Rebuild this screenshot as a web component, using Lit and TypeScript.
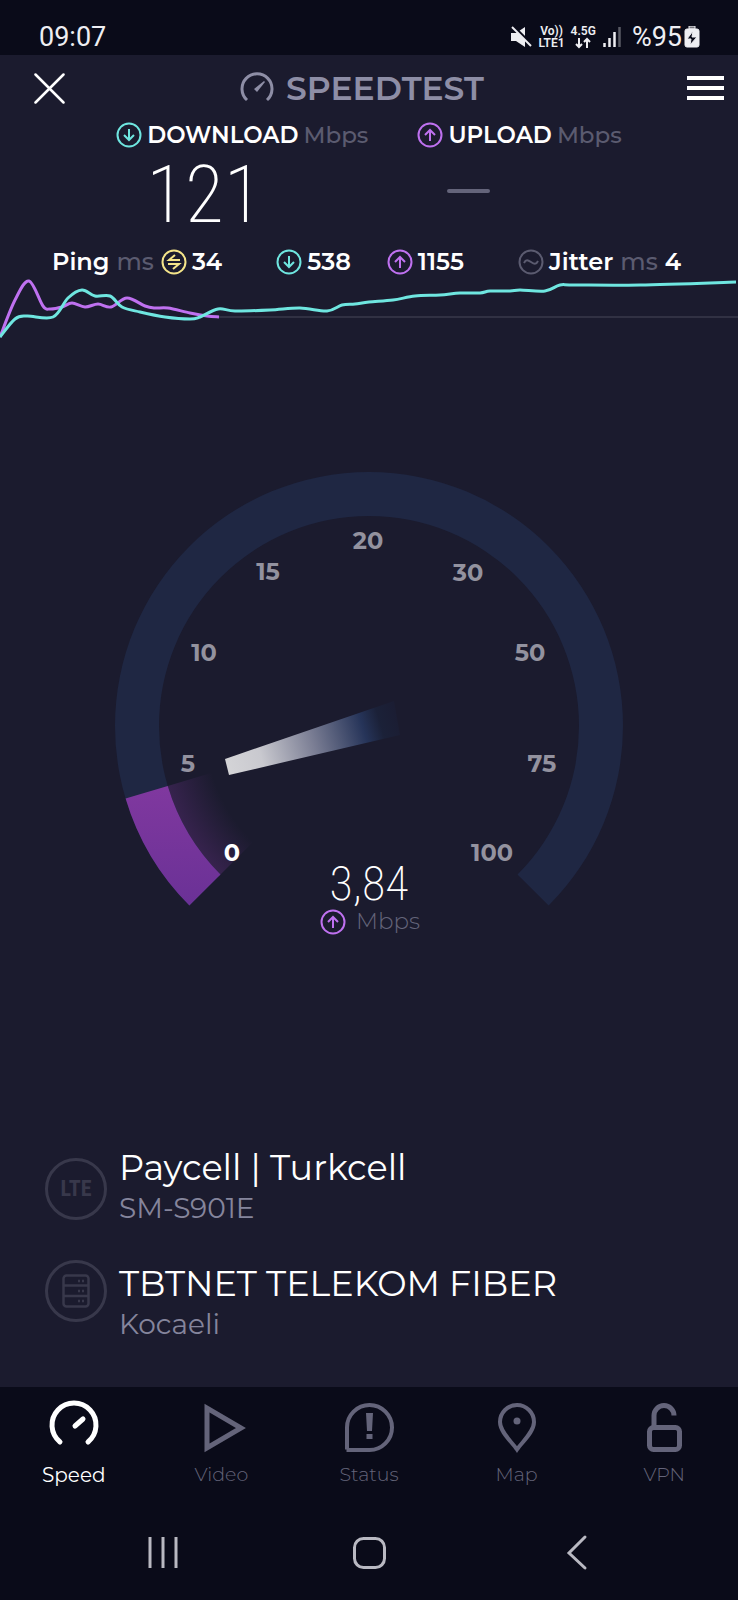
import { LitElement, html, svg, css } from "lit";
import { customElement } from "lit/decorators.js";
import { classMap } from "lit/directives/class-map.js";

type Point = [number, number];

const TRACE_DOWN: Point[] = [
  [0, 61], [15, 43], [27, 40], [53, 41], [68, 22], [82, 14], [95, 20], [110, 20], [122, 31], [140, 36],
  [165, 41], [190, 43], [200, 41], [218, 33], [235, 35], [270, 34], [300, 32], [327, 35], [342, 29],
  [355, 28], [369, 26], [393, 24], [415, 20], [440, 19], [460, 17], [480, 17], [490, 15], [510, 15],
  [520, 14], [545, 15], [560, 9], [575, 9], [640, 9], [736, 6],
];
const TRACE_UP: Point[] = [
  [0, 61], [15, 24], [29, 5], [43, 30], [50, 33], [62, 31], [72, 27], [85, 31], [98, 28], [111, 31],
  [127, 22], [145, 30], [155, 32], [168, 32], [190, 37], [207, 40], [219, 41],
];

/** Smooth line through the samples, with horizontal easing between neighbours. */
function smooth(points: Point[]): string {
  let d = `M${points[0][0]} ${points[0][1]}`;
  for (let i = 0; i < points.length - 1; i++) {
    const p0 = points[Math.max(i - 1, 0)];
    const p1 = points[i];
    const p2 = points[i + 1];
    const p3 = points[Math.min(i + 2, points.length - 1)];
    const c1 = [p1[0] + (p2[0] - p0[0]) / 6, p1[1] + (p2[1] - p0[1]) / 6];
    const c2 = [p2[0] - (p3[0] - p1[0]) / 6, p2[1] - (p3[1] - p1[1]) / 6];
    d += `C${c1[0]} ${c1[1]} ${c2[0]} ${c2[1]} ${p2[0]} ${p2[1]}`;
  }
  return d;
}

const CX = 369;
const CY = 266;
const R_OUT = 254;
const R_IN = 210;

function polar(r: number, deg: number): string {
  const a = (deg * Math.PI) / 180;
  return `${(CX + r * Math.cos(a)).toFixed(2)} ${(CY + r * Math.sin(a)).toFixed(2)}`;
}

/** Ring segment, clockwise from one angle to another. */
function ring(from: number, to: number, outer: number, inner: number): string {
  const large = to - from > 180 ? 1 : 0;
  return `M${polar(outer, from)}A${outer} ${outer} 0 ${large} 1 ${polar(outer, to)}L${polar(inner, to)}A${inner} ${inner} 0 ${large} 0 ${polar(inner, from)}Z`;
}

const TICKS: { label: string; x: number; y: number; lit?: boolean }[] = [
  { label: "0", x: 232, y: 401, lit: true },
  { label: "5", x: 188, y: 312 },
  { label: "10", x: 204, y: 201 },
  { label: "15", x: 268, y: 120 },
  { label: "20", x: 368, y: 89 },
  { label: "30", x: 468, y: 121 },
  { label: "50", x: 530, y: 201 },
  { label: "75", x: 542, y: 312 },
  { label: "100", x: 492, y: 401 },
];

const arrowDown = svg`<circle cx="13" cy="13" r="11.500"/><path d="M13 7v11M8 13l5 5 5-5"/>`;
const arrowUp = svg`<circle cx="13" cy="13" r="11.500"/><path d="M13 19V8M8 13l5-5 5 5"/>`;
const idle = svg`<circle cx="13" cy="13" r="11.500"/><path d="M19 11H8l6-5M7 15h11l-6 5"/>`;
const wave = svg`<circle cx="13" cy="13" r="11.500"/><path d="M6 14c2-4 4-3 7-1s5 3 7-1"/>`;

const TABS = [
  {
    label: "Speed",
    icon: svg`<path d="M12 41A22 22 0 1 1 40 41" stroke-width="5" stroke-linecap="round"/><path d="M27 25l8-7" stroke-width="5" stroke-linecap="round"/>`,
  },
  { label: "Video", icon: svg`<path d="M12 7v40l34-20z" stroke-width="5" stroke-miterlimit="10"/>` },
  {
    label: "Status",
    icon: svg`<path d="M4 48.500V26.500A22.500 22.500 0 1 1 26.500 49H3.500" stroke-width="4"/><path d="M23 12h7l-1 18h-5zM23.500 33h6v5h-6z" fill="currentColor" stroke="none"/>`,
  },
  {
    label: "Map",
    icon: svg`<path d="M26 48.500C21 41 9 31 9 21a17 17 0 0 1 34 0c0 10-12 20-17 27.500z" stroke-width="4"/><circle cx="26" cy="20" r="3.500" fill="currentColor" stroke="none"/>`,
  },
  {
    label: "VPN",
    icon: svg`<rect x="11.500" y="26.500" width="30" height="22" rx="4" stroke-width="5"/><path d="M16 26V14.500a10 10 0 0 1 20 0" stroke-width="5"/>`,
  },
];

@customElement("app-root")
export class AppRoot extends LitElement {
  static styles = css`
    :host {
      display: flex;
      flex-direction: column;
      min-height: 100vh;
      background: #1b1b2e;
      color: #fff;
      font-family: Montserrat, Inter, sans-serif;
    }
    button {
      padding: 0;
      border: 0;
      background: none;
      color: inherit;
      font: inherit;
      display: flex;
      cursor: pointer;
    }
    svg {
      display: block;
      fill: none;
      stroke: currentColor;
      flex: none;
    }
    .status {
      display: flex;
      align-items: center;
      justify-content: space-between;
      height: 55px;
      box-sizing: border-box;
      padding: 18px 38px 0 39px;
      background: #0a0b19;
      color: #eeeef2;
      font: 27px/36px Roboto, sans-serif;
    }
    .indicators {
      display: flex;
      align-items: center;
      gap: 6px;
    }
    .network {
      display: flex;
      flex-direction: column;
      align-items: center;
      font: 600 12px/12px Roboto, sans-serif;
    }
    .percent {
      display: flex;
      align-items: center;
      gap: 2px;
      margin-left: 4px;
    }
    .header {
      display: grid;
      grid-template-columns: 1fr auto 1fr;
      align-items: center;
      height: 66px;
      padding-right: 14px;
    }
    .close {
      padding-left: 34px;
    }
    .menu {
      justify-self: end;
    }
    .brand {
      display: flex;
      align-items: center;
      gap: 12px;
      margin: 0;
      color: #8e8ea6;
      font-size: 33px;
      line-height: 40px;
      font-weight: 600;
    }
    .results {
      display: flex;
      justify-content: center;
      gap: 49px;
    }
    .caption {
      display: flex;
      align-items: center;
      gap: 5px;
      font-size: 23px;
      line-height: 28px;
      font-weight: 600;
    }
    .unit {
      color: #5b5b70;
      font-weight: 500;
    }
    .value {
      display: flex;
      align-items: center;
      box-sizing: border-box;
      height: 92px;
      padding-left: 30px;
      font: 200 80px/92px "Roboto Condensed", Roboto, sans-serif;
    }
    .value.pending {
      padding-bottom: 8px;
    }
    .dash {
      width: 43px;
      height: 4px;
      border-radius: 2px;
      background: #64647a;
    }
    .latency {
      display: flex;
      justify-content: space-between;
      padding: 7px 57px 0 52px;
      font-size: 24px;
      line-height: 28px;
      font-weight: 600;
    }
    .group,
    .pair {
      display: flex;
      align-items: center;
      gap: 7px;
    }
    .group svg {
      margin-right: -2px;
    }
    .pair {
      gap: 36px;
    }
    .down { color: #6fe6e0; }
    .up { color: #bf71f0; }
    .idle { color: #f5e58a; }
    .dim { color: #5b5b70; }
    .trace {
      width: 100%;
      height: 66px;
    }
    .gauge {
      width: 100%;
      height: auto;
      margin-top: 118px;
      stroke: none;
    }
    .tick {
      fill: #93929f;
      font-size: 24px;
      font-weight: 700;
      text-anchor: middle;
    }
    .tick.lit { fill: #fff; }
    .speed {
      fill: #fff;
      font: 200 48px "Roboto Condensed", Roboto, sans-serif;
      text-anchor: middle;
    }
    .speed-unit {
      fill: #64647a;
      font-size: 23px;
      font-weight: 300;
    }
    .hosts {
      display: flex;
      flex-direction: column;
      gap: 26px;
      margin-top: auto;
      padding: 48px 45px 46px;
    }
    .host {
      display: flex;
      gap: 12px;
      align-items: flex-start;
    }
    .host:first-child { min-height: 90px; }
    .host:first-child .badge { align-self: center; }
    .badge {
      display: flex;
      align-items: center;
      justify-content: center;
      flex: none;
      box-sizing: border-box;
      width: 62px;
      height: 62px;
      border: 3px solid #38384b;
      border-radius: 50%;
      color: #38384b;
      font: 700 22px/24px "Roboto Condensed", Roboto, sans-serif;
    }
    .name {
      font-size: 35px;
      line-height: 47px;
    }
    .detail {
      color: #85859c;
      font-size: 28px;
      line-height: 34px;
    }
    .tabs {
      display: grid;
      grid-template-columns: repeat(5, 1fr);
      padding-top: 14px;
      background: #0a0b19;
    }
    .tab {
      display: flex;
      flex-direction: column;
      align-items: center;
      gap: 10px;
      color: #64647a;
      font-size: 19px;
      line-height: 24px;
      font-weight: 300;
      text-decoration: none;
    }
    .tab svg {
      overflow: visible;
    }
    .tab.active {
      color: #fff;
      font-size: 20px;
      font-weight: 400;
    }
    .system {
      display: grid;
      grid-template-columns: repeat(3, 1fr);
      justify-items: center;
      padding: 42px 60px 23px;
      background: #0a0b19;
      color: #b9b9c2;
    }
  `;

  private icon(cls: string, shape: unknown) {
    return html`<svg class=${cls} width="26" height="26" viewBox="0 0 26 26" stroke-width="2" aria-hidden="true">${shape}</svg>`;
  }

  render() {
    return html`
      <div class="status">
        <span>09:07</span>
        <div class="indicators">
          <svg width="22" height="22" viewBox="0 0 22 22" aria-hidden="true">
            <path d="M1 7h5l9-6v20l-9-6H1z" fill="currentColor" stroke="none" />
            <path d="M0 1l20 20" transform="translate(2 -2)" stroke="#0a0b19" stroke-width="3" />
            <path d="M2 1l19 19" stroke-width="2" />
          </svg>
          <div class="network"><span>Vo))</span><span>LTE1</span></div>
          <div class="network">
            <span>4.5G</span>
            <svg width="16" height="12" viewBox="0 0 16 12" stroke-width="2" aria-hidden="true">
              <path d="M4 1v9M1 7l3 3 3-3M12 11V2M9 5l3-3 3 3" />
            </svg>
          </div>
          <svg width="20" height="22" viewBox="0 0 20 22" stroke-width="2.500" aria-hidden="true">
            <path d="M2.500 21v-4M7.500 21v-9M12.500 21V6" />
            <path d="M17.500 21V1" opacity=".35" />
          </svg>
          <div class="percent">
            <span>%95</span>
            <svg width="16" height="22" viewBox="0 0 16 22" stroke="none" aria-hidden="true">
              <path d="M5 0h6v3H5z" fill="#77777f" />
              <rect x="1" y="3" width="14" height="18" rx="2" fill="currentColor" />
              <path d="M9 5l-6 8h4l-1 6 7-8H8z" fill="#0a0b19" />
            </svg>
          </div>
        </div>
      </div>

      <header class="header">
        <button class="close" aria-label="Close">
          <svg width="31" height="31" viewBox="0 0 31 31" stroke-width="2.500" stroke-linecap="round"><path d="M1.500 1.500l28 28M29.500 1.500l-28 28" /></svg>
        </button>
        <h1 class="brand">
          <svg width="34" height="32" viewBox="0 0 34 32" stroke-width="3" aria-hidden="true">
            <path d="M7 28A15 15 0 1 1 27 28" />
            <path d="M24 9l1 1-8 10-3-3z" fill="currentColor" stroke="none" />
          </svg>
          SPEEDTEST
        </h1>
        <button class="menu" aria-label="Menu">
          <svg width="37" height="26" viewBox="0 0 37 26" stroke-width="4"><path d="M0 3h37M0 13h37M0 23h37" /></svg>
        </button>
      </header>

      <section class="results">
        <div>
          <div class="caption">${this.icon("down", arrowDown)}<span>DOWNLOAD</span><span class="unit">Mbps</span></div>
          <div class="value">121</div>
        </div>
        <div>
          <div class="caption">${this.icon("up", arrowUp)}<span>UPLOAD</span><span class="unit">Mbps</span></div>
          <div class="value pending"><div class="dash"></div></div>
        </div>
      </section>

      <section class="latency">
        <div class="group"><span>Ping</span><span class="unit">ms</span>${this.icon("idle", idle)}<span>34</span></div>
        <div class="pair">
          <div class="group">${this.icon("down", arrowDown)}<span>538</span></div>
          <div class="group">${this.icon("up", arrowUp)}<span>1155</span></div>
        </div>
        <div class="group">${this.icon("dim", wave)}<span>Jitter</span><span class="unit">ms</span><span>4</span></div>
      </section>

      <svg class="trace" viewBox="0 0 738 66" preserveAspectRatio="none" stroke-width="3" aria-hidden="true">
        <path d="M219 41H738" stroke="#313143" stroke-width="2" />
        <path class="up" d=${smooth(TRACE_UP)} />
        <path class="down" d=${smooth(TRACE_DOWN)} />
      </svg>

      <svg class="gauge" viewBox="0 0 738 480" role="img" aria-label="Upload speed 3,84 Mbps">
        <defs>
          <linearGradient id="fill" x1="0" y1="0" x2="0" y2="1">
            <stop offset="0" stop-color="#80389f" />
            <stop offset="1" stop-color="#6a3196" />
          </linearGradient>
          <radialGradient id="glow" gradientUnits="userSpaceOnUse" cx=${CX} cy=${CY} r=${R_IN}>
            <stop offset=".78" stop-color="#7d379e" stop-opacity="0" />
            <stop offset="1" stop-color="#7d379e" stop-opacity=".28" />
          </radialGradient>
          <linearGradient id="needle" gradientUnits="userSpaceOnUse" x1="227" y1="307" x2="397" y2="258">
            <stop offset="0" stop-color="#d4d4d7" />
            <stop offset=".2" stop-color="#c9c9cf" />
            <stop offset=".5" stop-color="#7c7f95" />
            <stop offset=".8" stop-color="#263459" />
            <stop offset=".9" stop-color="#1b2138" />
            <stop offset="1" stop-color="#1b1d33" />
          </linearGradient>
        </defs>
        <path d=${ring(135, 405, R_OUT, R_IN)} fill="#1f2743" />
        <path d=${ring(135, 163.4, R_IN, 150)} fill="url(#glow)" />
        <path d=${ring(135, 163.4, R_OUT, R_IN)} fill="url(#fill)" />
        <path d="M225 299L394 241L400 275L229 315z" fill="url(#needle)" />
        ${TICKS.map((t) => svg`<text class=${classMap({ tick: true, lit: !!t.lit })} x=${t.x} y=${t.y}>${t.label}</text>`)}
        <text class="speed" x="369" y="440">3,84</text>
        <g transform="translate(320 449)" class="up" stroke="currentColor" stroke-width="2">${arrowUp}</g>
        <text class="speed-unit" x="356" y="469">Mbps</text>
      </svg>

      <section class="hosts">
        <div class="host">
          <div class="badge">LTE</div>
          <div>
            <div class="name">Paycell | Turkcell</div>
            <div class="detail">SM-S901E</div>
          </div>
        </div>
        <div class="host">
          <div class="badge">
            <svg width="28" height="34" viewBox="0 0 28 34" stroke-width="2.500" aria-hidden="true">
              <rect x="1.500" y="1.500" width="25" height="31" rx="3" />
              <path d="M2 11.500h24M2 22h24" />
              <path d="M16 7h2M20 7h2M16 17h2M20 17h2M16 27h2M20 27h2" />
            </svg>
          </div>
          <div>
            <div class="name">TBTNET TELEKOM FIBER</div>
            <div class="detail">Kocaeli</div>
          </div>
        </div>
      </section>

      <nav class="tabs">
        ${TABS.map(
          (tab, i) => html`<a class=${classMap({ tab: true, active: i === 0 })} href="#${tab.label.toLowerCase()}">
            <svg width="52" height="52" viewBox="0 0 52 52" aria-hidden="true">${tab.icon}</svg>
            <span>${tab.label}</span>
          </a>`,
        )}
      </nav>

      <div class="system">
        <button aria-label="Recent apps">
          <svg width="48" height="48" viewBox="0 0 48 48" stroke-width="3"><path d="M11 8v31M24 8v31M37 8v31" /></svg>
        </button>
        <button aria-label="Home">
          <svg width="48" height="48" viewBox="0 0 48 48" stroke-width="3"><rect x="9.500" y="9.500" width="30" height="29" rx="9" /></svg>
        </button>
        <button aria-label="Back">
          <svg width="48" height="48" viewBox="0 0 48 48" stroke-width="3" stroke-linecap="round"><path d="M34 8L18 24l16 15" /></svg>
        </button>
      </div>
    `;
  }
}
